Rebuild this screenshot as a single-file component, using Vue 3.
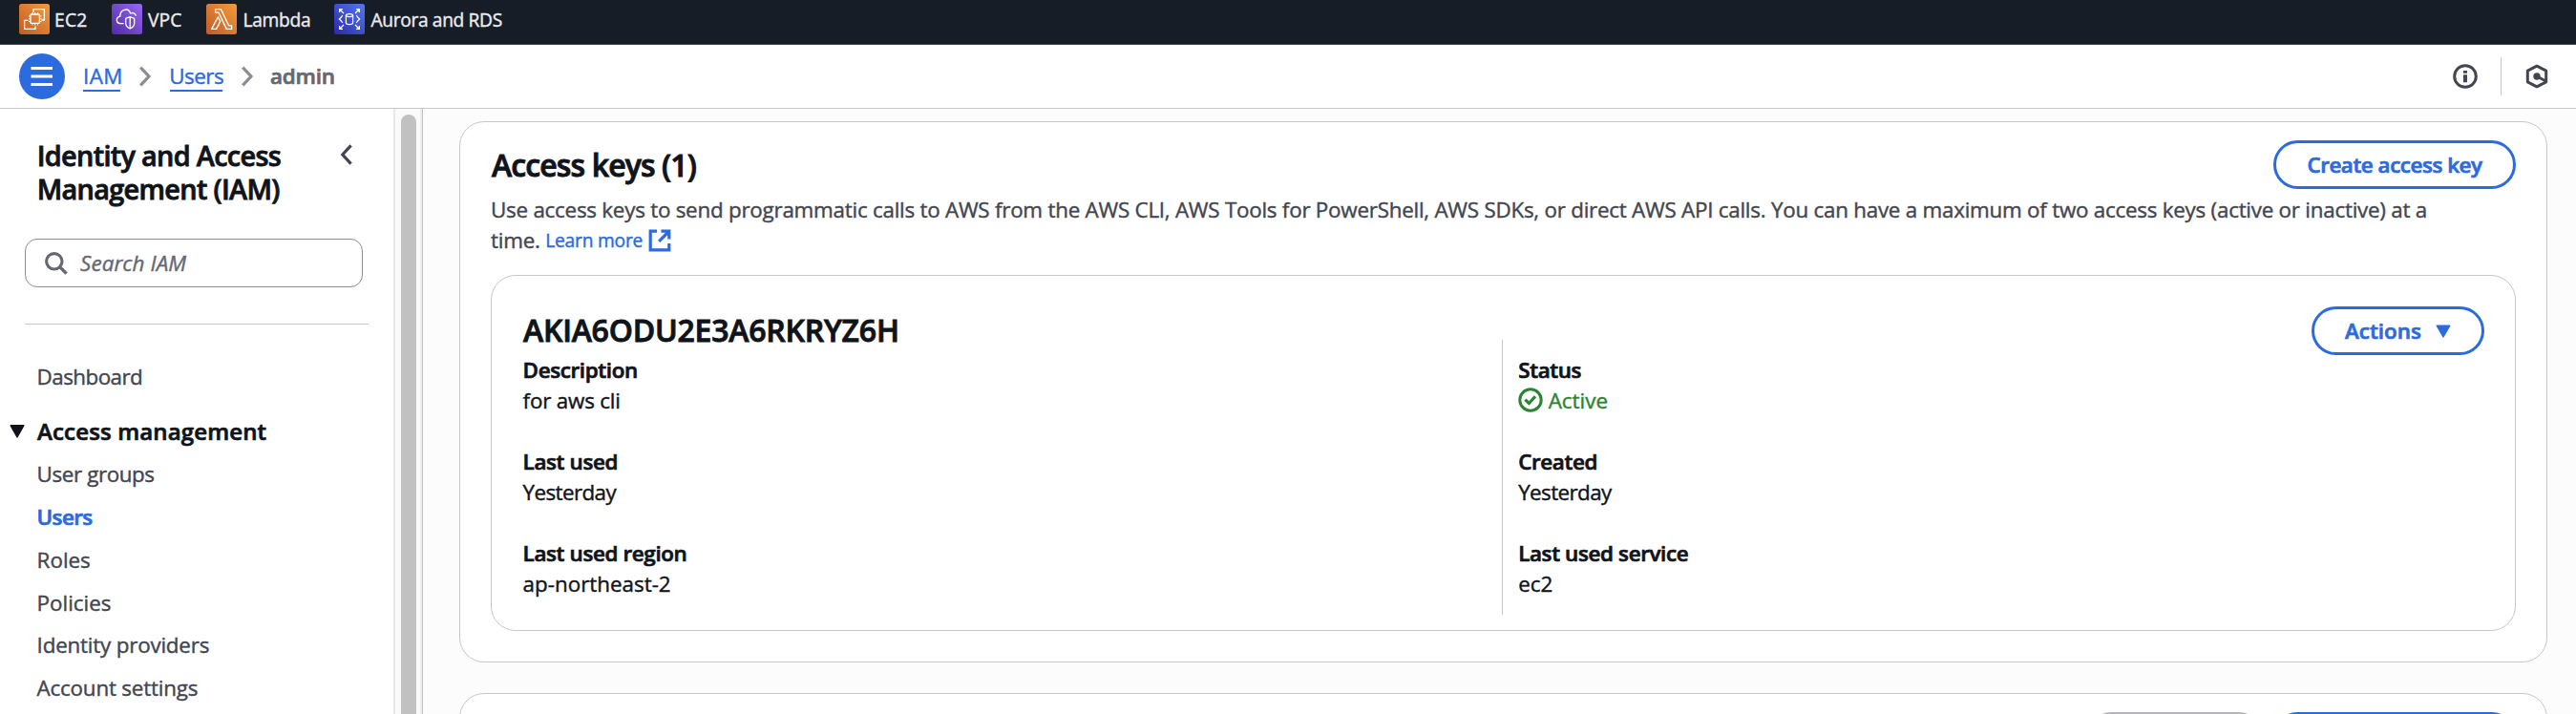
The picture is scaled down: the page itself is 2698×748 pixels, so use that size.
<script setup>
const navItems = [
  { label: 'User groups', fit: 'snug' },
  { label: 'Users', active: true },
  { label: 'Roles' },
  { label: 'Policies' },
  { label: 'Identity providers', fit: 'soft' },
  { label: 'Account settings', fit: 'soft' }
]
const leftFields = [
  { label: 'Description', value: 'for aws cli', fit: 'soft' },
  { label: 'Last used', value: 'Yesterday', fit: 'tight' },
  { label: 'Last used region', value: 'ap-northeast-2' }
]
const rightFields = [
  { label: 'Status', value: 'Active', status: true },
  { label: 'Created', value: 'Yesterday', fit: 'tight' },
  { label: 'Last used service', value: 'ec2' }
]
</script>

<template>
  <div class="page">
    <nav class="favorites">
      <a class="fav fav-ec2">
        <svg class="svc" viewBox="0 0 32 32">
          <defs><linearGradient id="gOrange" x1="0" y1="1" x2="1" y2="0"><stop offset="0" stop-color="#bf5b2c" /><stop offset="1" stop-color="#f39c37" /></linearGradient></defs>
          <rect width="32" height="32" rx="2.5" fill="url(#gOrange)" />
          <g fill="none" stroke="#fff" stroke-width="1.3">
            <path d="M15 9V5.6H26.4V17H23.5M9.5 17.4H5.6V26.4H17V23.5" />
            <rect x="12" y="11" width="9.4" height="9.4" rx="1" />
            <path d="M14 9v2M16.7 9v2M19.4 9v2M14 20.4v2M16.7 20.4v2M19.4 20.4v2M10 13h2M10 15.7h2M10 18.4h2M21.4 13h2M21.4 15.7h2M21.4 18.4h2" stroke-width="1" />
          </g>
        </svg>
        <span>EC2</span>
      </a>
      <a class="fav fav-vpc">
        <svg class="svc" viewBox="0 0 32 32">
          <defs><linearGradient id="gPurple" x1="0" y1="1" x2="1" y2="0"><stop offset="0" stop-color="#4f2aa6" /><stop offset="1" stop-color="#9a68f2" /></linearGradient></defs>
          <rect width="32" height="32" rx="2.5" fill="url(#gPurple)" />
          <g fill="none" stroke="#fff" stroke-width="1.3" stroke-linejoin="round">
            <path d="M12.6 20.6H9C4.2 20.3 4.2 14.1 8.8 13.2C8.6 5.6 17.6 3.4 19.6 10C22.2 8.8 24.8 10 25.4 12.6" />
            <path d="M19.2 13.6L23.7 15.4V20.5C23.6 23.2 21.6 25 19.2 26C16.8 25 14.8 23.2 14.7 20.5V15.4ZM19.2 13.8V25.8" />
          </g>
        </svg>
        <span>VPC</span>
      </a>
      <a class="fav fav-lambda">
        <svg class="svc" viewBox="0 0 32 32">
          <rect width="32" height="32" rx="2.5" fill="url(#gOrange)" />
          <g fill="none" stroke="#fff" stroke-width="1.3" stroke-linejoin="round">
            <path d="M9.6 5.6H15.4L23.6 22.8H26.6V26.4H21.3L13 9.2H9.6Z" />
            <path d="M12.4 13.8L14.7 18.4L10.6 26.4H5.6Z" />
          </g>
        </svg>
        <span>Lambda</span>
      </a>
      <a class="fav fav-rds">
        <svg class="svc" viewBox="0 0 32 32">
          <defs><linearGradient id="gBlue" x1="0" y1="1" x2="1" y2="0"><stop offset="0" stop-color="#2b29a8" /><stop offset="1" stop-color="#5279f2" /></linearGradient></defs>
          <rect width="32" height="32" rx="2.5" fill="url(#gBlue)" />
          <g fill="none" stroke="#fff" stroke-width="1.25">
            <path d="M5.6 9V5.6H9M5.8 5.8L10 10M23 5.6H26.4V9M26.2 5.8L22 10M5.6 23V26.4H9M5.8 26.2L10 22M23 26.4H26.4V23M26.2 26.2L22 22" />
            <path d="M8.8 12L7.4 14L5.4 16L7.4 18L8.8 20M23.2 12L24.6 14L26.6 16L24.6 18L23.2 20" />
            <ellipse cx="16" cy="12" rx="3.6" ry="1.5" />
            <path d="M12.4 12V20C12.4 22 19.6 22 19.6 20V12" />
          </g>
        </svg>
        <span>Aurora and RDS</span>
      </a>
    </nav>

    <header class="crumbs">
      <button class="menu" aria-label="Menu">
        <svg width="48" height="48" viewBox="0 0 48 48"><path d="M12.5 15.5H35M12.5 24H35M12.5 32.5H35" stroke="#fff" stroke-width="3" /></svg>
      </button>
      <a class="crumb crumb-iam">IAM</a>
      <svg class="chev" width="14" height="24" viewBox="0 0 14 24"><path d="M2.2 2.6L11 12L2.2 21.4" fill="none" stroke="#8c8c94" stroke-width="3.2" /></svg>
      <a class="crumb crumb-users">Users</a>
      <svg class="chev" width="14" height="24" viewBox="0 0 14 24"><path d="M2.2 2.6L11 12L2.2 21.4" fill="none" stroke="#8c8c94" stroke-width="3.2" /></svg>
      <span class="current">admin</span>
      <div class="tools">
        <svg width="26" height="26" viewBox="0 0 26 26"><circle cx="13" cy="13" r="11.3" fill="none" stroke="#424650" stroke-width="3" /><path d="M11 7h4v2.8h-4zM11 11.3h4v8h-4z" fill="#424650" /></svg>
        <i class="sep"></i>
        <svg width="26" height="26" viewBox="0 0 26 26"><path d="M13 2.2L22.7 7.2V18.8L13 23.8L3.3 18.8V7.2Z" fill="none" stroke="#424650" stroke-width="3" stroke-linejoin="round" /><circle cx="13" cy="13" r="3.7" fill="#424650" /><path d="M13 13L22.5 18" stroke="#424650" stroke-width="3" /></svg>
      </div>
    </header>

    <div class="body">
      <aside class="sidebar">
        <div class="side-head">
          <h2>Identity and Access<br />Management (IAM)</h2>
          <svg width="14" height="24" viewBox="0 0 14 24"><path d="M11.6 2.4L2.8 12L11.6 21.6" fill="none" stroke="#424650" stroke-width="3.2" /></svg>
        </div>
        <div class="search">
          <svg width="26" height="26" viewBox="0 0 26 26"><circle cx="10.8" cy="10.8" r="8.2" fill="none" stroke="#656871" stroke-width="3.1" /><path d="M16.6 16.6L23.6 23.6" stroke="#656871" stroke-width="3.4" /></svg>
          <span>Search IAM</span>
        </div>
        <hr />
        <a class="nav dash">Dashboard</a>
        <div class="section">
          <svg width="16" height="14" viewBox="0 0 16 14"><path d="M1.2 .8H14.8L8 12.8Z" fill="#0f141a" stroke="#0f141a" stroke-width="1.4" stroke-linejoin="round" /></svg>
          <span>Access management</span>
        </div>
        <a v-for="item in navItems" :key="item.label" class="nav" :class="[item.fit, { active: item.active }]">{{ item.label }}</a>
      </aside>
      <div class="scroll"><div class="thumb"></div></div>

      <main class="main">
        <section class="card keys">
          <div class="card-head">
            <h1>Access keys (1)</h1>
            <button class="btn create">Create access key</button>
          </div>
          <p class="desc">
            Use access keys to send programmatic calls to AWS from the AWS CLI, AWS Tools for PowerShell, AWS SDKs, or direct AWS API calls. You can have a maximum of two access keys (active or inactive) at a time.
            <a class="learn">Learn more<svg width="24" height="24" viewBox="0 0 24 24"><path d="M9 2.2H2.2V21.8H21.8V15M13.4 2.2H21.8V10.6M21.5 2.5L11.2 12.8" fill="none" stroke="#2b6bdd" stroke-width="3.2" /></svg></a>
          </p>
          <div class="key">
            <div class="key-head">
              <h1>AKIA6ODU2E3A6RKRYZ6H</h1>
              <button class="btn actions">
                <span>Actions</span>
                <svg width="16" height="14" viewBox="0 0 16 14"><path d="M1.2 1.2H14.8L8 12.8Z" fill="#2b6bdd" stroke="#2b6bdd" stroke-width="1.4" stroke-linejoin="round" /></svg>
              </button>
            </div>
            <div class="cols">
              <dl class="col">
                <div v-for="f in leftFields" :key="f.label" class="field">
                  <dt>{{ f.label }}</dt>
                  <dd :class="f.fit">{{ f.value }}</dd>
                </div>
              </dl>
              <dl class="col second">
                <div v-for="f in rightFields" :key="f.label" class="field">
                  <dt>{{ f.label }}</dt>
                  <dd :class="[f.fit, { ok: f.status }]">
                    <svg v-if="f.status" width="26" height="26" viewBox="0 0 26 26"><circle cx="13" cy="13" r="11.2" fill="none" stroke="#2b8432" stroke-width="3" /><path d="M7.4 12.6L11.4 16.5L18 9.2" fill="none" stroke="#2b8432" stroke-width="3.2" /></svg>
                    <span>{{ f.value }}</span>
                  </dd>
                </div>
              </dl>
            </div>
          </div>
        </section>
        <section class="card next">
          <button class="btn off"></button>
          <button class="btn on"></button>
        </section>
      </main>
    </div>
  </div>
</template>

<style>
body { overflow: hidden; }
</style>

<style scoped>
.page {
  width: 100%;
  height: 748px;
  overflow: hidden;
  display: flex;
  flex-direction: column;
  font-family: "Open Sans", "Noto Sans", sans-serif;
  font-size: 22.4px;
  line-height: 32px;
  color: #0f141a;
  background: #fff;
  white-space: nowrap;
  -webkit-text-stroke: 0.4px;
}
h1, h2, p, dl, dd, hr { margin: 0; padding: 0; }
svg { display: block; flex: none; }
button { font: inherit; letter-spacing: inherit; padding: 0; margin: 0; border: 0; background: none; }

.favorites {
  flex: none;
  height: 47px;
  box-sizing: border-box;
  background: #161d26;
  border-bottom: 1px solid #424650;
  padding: 4px 0 0 20px;
  display: flex;
  font-size: 19.2px;
  line-height: 33px;
  color: #ebebf0;
}
.fav { display: flex; box-sizing: border-box; flex: none; }
.svc { width: 32px; height: 32px; margin-right: 5px; }
.fav-ec2 { width: 97px; letter-spacing: 0.3px; }
.fav-vpc { width: 99px; letter-spacing: 0.15px; }
.fav-vpc .svc { margin-right: 6px; }
.fav-lambda { width: 134px; letter-spacing: -0.3px; }
.fav-rds { letter-spacing: -0.35px; }
.fav-lambda .svc, .fav-rds .svc { margin-right: 6.5px; }

.crumbs {
  flex: none;
  height: 67px;
  box-sizing: border-box;
  border-bottom: 1px solid #c6c6cd;
  padding: 0 28px 0 20px;
  display: flex;
  align-items: center;
}
.menu { width: 48px; height: 48px; border-radius: 50%; background: #2b6bdd; margin-right: 19px; }
.crumb { color: #2b6bdd; box-shadow: inset 0 -2px #2b6bdd; box-sizing: border-box; }
.crumb-iam { width: 39px; letter-spacing: 0.4px; }
.crumb-users { width: 55px; letter-spacing: -0.5px; text-indent: -0.8px; }
.chev { margin: 0 19px 0 19px; }
.crumb-users + .chev { margin-right: 17px; }
.current { font-weight: 600; color: #656871; letter-spacing: -0.2px; -webkit-text-stroke: 0.7px; }
.tools { margin-left: auto; display: flex; align-items: center; }
.sep { width: 1px; height: 40px; background: #c6c6cd; margin: 0 24px; }

.body { flex: 1; min-height: 0; display: flex; }
.sidebar { width: 412px; flex: none; box-sizing: border-box; padding: 31px 0 0 38px; color: #424650; }
.side-head { display: flex; justify-content: space-between; padding-right: 42px; height: 105px; }
.side-head svg { margin-top: 5px; }
h2 { padding-left: 0.7px; font-size: 28.8px; line-height: 35.2px; font-weight: 600; letter-spacing: -0.66px; color: #0f141a; -webkit-text-stroke: 0.8px; }
.search {
  width: 354px;
  height: 51px;
  box-sizing: border-box;
  border: 1.4px solid #8c8c94;
  border-radius: 13px;
  margin-left: -12px;
  padding-left: 19px;
  display: flex;
  align-items: center;
  color: #656871;
  font-style: italic;
  letter-spacing: 0.1px;
}
.search svg { margin-right: 12px; }
hr { border: 0; height: 1px; width: 360px; background: #c6c6cd; margin: 38px 0 33px -12px; }
.nav { display: block; height: 44.8px; line-height: 44.8px; padding-left: 0.6px; }
.dash { letter-spacing: -0.55px; }
.snug { letter-spacing: -0.4px; }
.soft { letter-spacing: -0.2px; }
.tight { letter-spacing: -0.6px; }
.active { color: #2b6bdd; font-weight: 600; letter-spacing: -0.6px; -webkit-text-stroke: 0.7px; }
.section {
  display: flex;
  align-items: center;
  height: 42.5px;
  line-height: 42.5px;
  margin: 13.4px 0 1.6px -28px;
  font-size: 24px;
  font-weight: 600;
  letter-spacing: 0.15px;
  color: #0f141a;
  -webkit-text-stroke: 0.7px;
}
.section svg { margin-right: 13px; }

.scroll {
  width: 31px;
  flex: none;
  box-sizing: border-box;
  background: #fafafa;
  border-left: 2px solid #e8e8e8;
  border-right: 1px solid #c0c0c4;
  box-shadow: inset -2px 0 #ededed;
  padding: 6px 0 0 6px;
}
.thumb { width: 16px; height: 700px; border-radius: 8px; background: #c1c1c1; }

.main { flex: 1; min-width: 0; background: #fcfcfd; padding: 13px 30px 0 38px; }
.card { border: 1px solid #c6c6cd; border-radius: 26px; background: #fff; box-sizing: border-box; }
.keys { height: 567px; padding: 19px 32px 0 32px; }
.card-head { display: flex; justify-content: space-between; height: 57px; }
h1 { font-size: 32px; line-height: 40px; font-weight: 600; letter-spacing: -0.88px; -webkit-text-stroke: 0.9px; }
.card-head h1 { padding: 6px 0 0 1px; }
.btn {
  height: 51px;
  box-sizing: border-box;
  border: 3px solid #2b6bdd;
  border-radius: 26px;
  color: #2b6bdd;
  font-weight: 600;
  background: #fff;
  flex: none;
  -webkit-text-stroke: 0.7px;
}
.create { width: 254px; letter-spacing: -0.45px; }
.desc { max-width: 2060px; white-space: normal; color: #424650; letter-spacing: -0.243px; height: 84px; }
.learn { display: inline-flex; align-items: center; vertical-align: top; height: 32px; line-height: 34px; font-size: 19.2px; letter-spacing: -0.2px; color: #2b6bdd; }
.learn svg { margin-left: 6px; }
.key { border: 1px solid #c6c6cd; border-radius: 26px; height: 373px; box-sizing: border-box; padding: 32px 32px 0 32px; }
.key-head { display: flex; justify-content: space-between; align-items: flex-start; height: 35px; }
.key-head h1 { letter-spacing: -0.22px; padding: 5px 0 0 1px; }
.actions { width: 181px; display: flex; align-items: center; padding-left: 32px; }
.actions span { width: 95px; text-align: left; }
.cols { display: flex; height: 288px; }
.col { width: 1026px; box-sizing: border-box; padding-left: 0.6px; }
.second { width: auto; flex: 1; border-left: 1px solid #c6c6cd; padding-left: 16.2px; }
.field { height: 96px; box-sizing: border-box; padding-top: 16.3px; }
dt { font-weight: 600; letter-spacing: -0.36px; -webkit-text-stroke: 0.7px; }
.ok { display: flex; align-items: center; color: #2b8432; }
.ok svg { margin: -2px 6px 0 -0.5px; }

.next { margin-top: 32px; height: 200px; padding: 19px 32px 0; display: flex; justify-content: flex-end; gap: 11px; }
.off { width: 184px; border-color: #b4b4bb; }
.on { width: 254px; }
</style>
